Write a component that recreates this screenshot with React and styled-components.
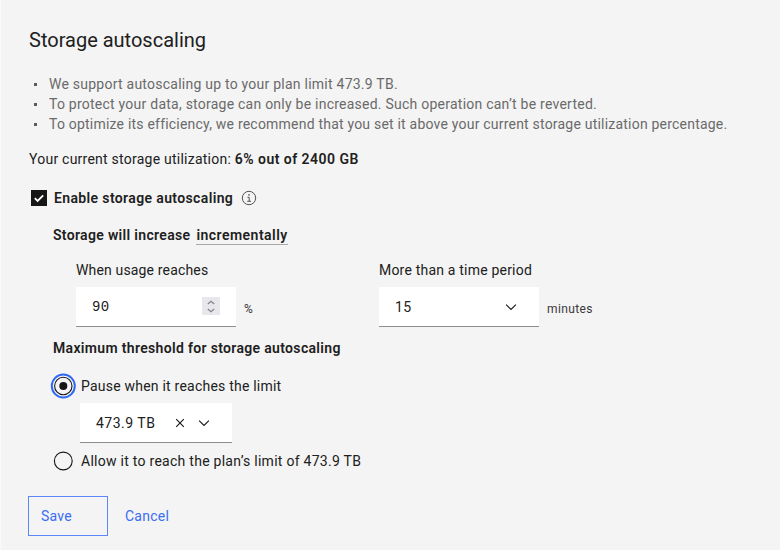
import React from "react";
import styled, { createGlobalStyle, css } from "styled-components";

const GlobalStyle = createGlobalStyle`
  *, *::before, *::after { box-sizing: border-box; }
  body { margin: 0; background: #f4f4f4; }
`;

const Panel = styled.main`
  width: 780px;
  height: 550px;
  padding: 25px 27px 0;
  overflow: hidden;
  background: #f4f4f4;
  border-left: 1px solid #fafafa;
  color: #202020;
  font: 400 14px/20px Roboto, sans-serif;
  letter-spacing: 0.24px;
  white-space: nowrap;
`;

const Title = styled.h1`
  margin: 0;
  padding-left: 1px;
  font-size: 20px;
  font-weight: 400;
  line-height: 30px;
  letter-spacing: 0;
`;

const Notes = styled.ul`
  margin: 19px 0 0;
  padding: 0;
  list-style: none;
  color: #6a6a6a;
`;

const Note = styled.li`
  display: flex;
  align-items: center;
  gap: 12px;
  height: 20px;
  padding-left: 6px;
  letter-spacing: ${(p) => p.$spacing || "0.24px"};

  &::before {
    content: "";
    width: 3px;
    height: 3px;
    background: #5c5c5c;
  }
`;

const Utilization = styled.p`
  margin: 15px 0 0 1px;
`;

const Strong = styled.strong`
  font-weight: 600;
  letter-spacing: ${(p) => p.$spacing || "0.37px"};
`;

const CheckRow = styled.label`
  display: flex;
  align-items: center;
  height: 20px;
  margin: 19px 0 0 3px;

  ${Strong} { margin: 0 8px 0 7px; }
`;

const Section = styled.section`
  margin: 17px 0 0 24px;
`;

const Heading = styled.h2`
  display: flex;
  gap: 6px;
  margin: 0;
  padding-left: 1px;
  height: 20px;
  font-size: 14px;
  font-weight: 600;
  line-height: 20px;
  letter-spacing: 0.33px;
`;

const Term = styled.span`
  height: 20px;
  border-bottom: 1px solid #a8a8a8;
  letter-spacing: 0.47px;
`;

const Fields = styled.div`
  display: grid;
  grid-template-columns: 303px auto;
  margin: 15px 0 11px 24px;
`;

const FieldLabel = styled.div`
  margin-bottom: 7px;
  letter-spacing: ${(p) => p.$spacing};
`;

const FieldRow = styled.div`
  display: flex;
  align-items: center;
  gap: 8px;
`;

const Control = styled.div`
  display: flex;
  align-items: center;
  width: ${(p) => p.$width};
  height: 40px;
  padding: 0 16px;
  background: #fff;
  border-bottom: 1px solid #8d8d8d;
`;

const Value = styled.span`
  flex: 1;
  letter-spacing: 0.5px;
  ${(p) => p.$mono && css`
    font-family: "Liberation Mono", monospace;
    letter-spacing: 0.3px;
  `}
`;

const Unit = styled.span`
  padding-top: 4px;
  font-size: 12px;
  letter-spacing: 0.4px;
  color: #393939;
`;

const Stepper = styled.span`
  display: grid;
  place-items: center;
  width: 18px;
  height: 18px;
  margin-top: -1px;
  background: #e8e8ec;
`;

const Icon = styled.svg`
  display: block;
  flex: none;
  overflow: visible;
  fill: none;
  stroke: ${(p) => p.$color || "#161616"};
  margin-right: ${(p) => p.$gap || 0};
`;

const RadioRow = styled.label`
  display: flex;
  align-items: center;
  gap: 6px;
  height: 24px;
  margin-left: -1px;
  letter-spacing: ${(p) => p.$spacing};
`;

const Choices = styled.div`
  display: flex;
  flex-direction: column;
  margin-top: 16px;
`;

const Nested = styled.div`
  margin: 5px 0 6px 28px;
`;

const Actions = styled.div`
  display: flex;
  align-items: center;
  gap: 17px;
  margin-top: 23px;
`;

const Button = styled.button`
  height: ${(p) => (p.$outlined ? "40px" : "20px")};
  width: ${(p) => (p.$outlined ? "80px" : "auto")};
  padding: 0 0 0 ${(p) => (p.$outlined ? "12px" : "0")};
  border: ${(p) => (p.$outlined ? "1px solid #5b87fb" : "0")};
  background: transparent;
  color: #3a6df5;
  font: inherit;
  letter-spacing: 0.25px;
  text-align: left;
`;

const CheckedBox = () => (
  <Icon width="16" height="16" viewBox="0 0 16 16">
    <rect width="16" height="16" fill="#161616" stroke="none" />
    <path d="M3.8 8.2 6.6 11 12.2 5.4" stroke="#fff" strokeWidth="1.8" />
  </Icon>
);

const Info = () => (
  <Icon width="16" height="16" viewBox="0 0 16 16" $color="#525252">
    <circle cx="8" cy="8" r="6.7" />
    <path d="M6.5 7.3h1.7v3.9M6.2 11.3h3.8" />
    <circle cx="8" cy="4.9" r=".8" fill="#525252" stroke="none" />
  </Icon>
);

const Chevron = () => (
  <Icon width="16" height="16" viewBox="0 0 16 16" $gap="4px">
    <path d="m3.1 5.6 4.9 4.9 4.9-4.9" strokeWidth="1.1" />
  </Icon>
);

const Clear = () => (
  <Icon width="16" height="16" viewBox="0 0 16 16" $gap="8px">
    <path d="m4.2 4.2 7.6 7.6M11.8 4.2l-7.6 7.6" strokeWidth="1.1" />
  </Icon>
);

const Radio = ({ checked }) => (
  <Icon width="24" height="24" viewBox="0 0 24 24">
    {checked && <circle cx="12.3" cy="12" r="11.5" stroke="#2f68f6" strokeWidth="2" />}
    <circle cx="12.3" cy="12" r={checked ? 8.7 : 8.9} strokeWidth="1.1" />
    {checked && <circle cx="12.3" cy="12" r="4" fill="#161616" stroke="none" />}
  </Icon>
);

export default function App() {
  return (
    <>
      <GlobalStyle />
      <Panel>
        <Title>Storage autoscaling</Title>
        <Notes>
          <Note>We support autoscaling up to your plan limit 473.9 TB.</Note>
          <Note>To protect your data, storage can only be increased. Such operation can’t be reverted.</Note>
          <Note $spacing="0.21px">
            To optimize its efficiency, we recommend that you set it above your current storage utilization percentage.
          </Note>
        </Notes>
        <Utilization>
          Your current storage utilization: <Strong $spacing="0.47px">6% out of 2400 GB</Strong>
        </Utilization>
        <CheckRow>
          <CheckedBox />
          <Strong>Enable storage autoscaling</Strong>
          <Info />
        </CheckRow>
        <Section>
          <Heading>
            Storage will increase <Term>incrementally</Term>
          </Heading>
          <Fields>
            <div>
              <FieldLabel $spacing="0.16px">When usage reaches</FieldLabel>
              <FieldRow>
                <Control $width="160px">
                  <Value $mono>90</Value>
                  <Stepper>
                    <Icon width="16" height="16" viewBox="0 0 16 16" $color="#84848c">
                      <path d="M4.8 6 8 3.3 11.2 6M4.8 11 8 13.7l3.2-2.7" strokeWidth="1.3" />
                    </Icon>
                  </Stepper>
                </Control>
                <Unit>%</Unit>
              </FieldRow>
            </div>
            <div>
              <FieldLabel $spacing="0.2px">More than a time period</FieldLabel>
              <FieldRow>
                <Control $width="160px">
                  <Value>15</Value>
                  <Chevron />
                </Control>
                <Unit>minutes</Unit>
              </FieldRow>
            </div>
          </Fields>
          <Heading>Maximum threshold for storage autoscaling</Heading>
          <Choices>
            <RadioRow $spacing="0.22px">
              <Radio checked />
              Pause when it reaches the limit
            </RadioRow>
            <Nested>
              <Control $width="152px">
                <Value>473.9 TB</Value>
                <Clear />
                <Chevron />
              </Control>
            </Nested>
            <RadioRow $spacing="0.27px">
              <Radio />
              Allow it to reach the plan’s limit of 473.9 TB
            </RadioRow>
          </Choices>
        </Section>
        <Actions>
          <Button $outlined>Save</Button>
          <Button>Cancel</Button>
        </Actions>
      </Panel>
    </>
  );
}
